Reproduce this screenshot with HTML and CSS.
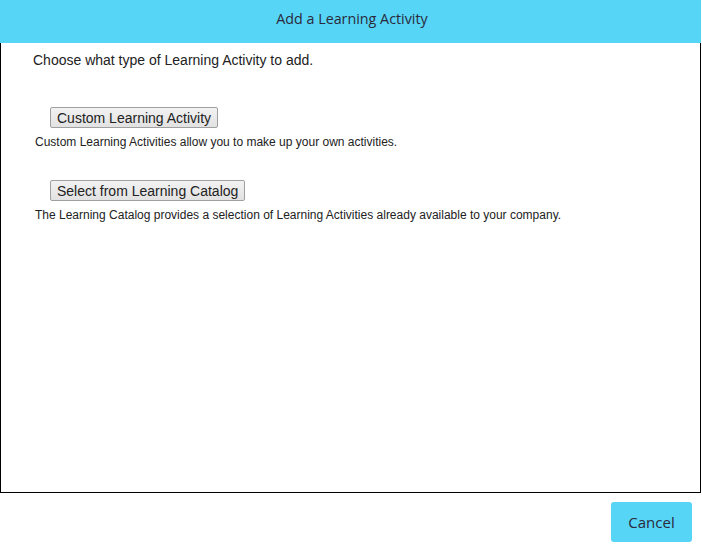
FILE: index.html
```html
<!DOCTYPE html>
<html lang="en">
  <head>
    <meta charset="UTF-8" />
    <title>Add a Learning Activity</title>
    <link rel="stylesheet" href="styles.css">
  </head>
  <body>
    <div class="dialog">
      <div class="dialog-header">Add a Learning Activity</div>
      <div class="dialog-body">
        <p class="intro">Choose what type of Learning Activity to add.</p>
        <div class="option">
          <button type="button" class="option-btn">Custom Learning Activity</button>
          <div class="option-desc">Custom Learning Activities allow you to make up your own activities.</div>
        </div>
        <div class="option">
          <button type="button" class="option-btn">Select from Learning Catalog</button>
          <div class="option-desc">The Learning Catalog provides a selection of Learning Activities already available to your company.</div>
        </div>
      </div>
    </div>
    <div class="dialog-footer">
      <button type="button" class="cancel-btn">Cancel</button>
    </div>
  </body>
</html>
```

FILE: styles.css
```css
*,
*::before,
*::after {
  box-sizing: border-box;
}

body {
  margin: 0;
  font-family: 'Liberation Sans', Arial, sans-serif;
  color: #222;
  background: #fff;
}

.dialog {
  width: 701px;
  height: 493px;
  border: 1px solid #000;
  border-top: none;
  display: flex;
  flex-direction: column;
}

.dialog-header {
  height: 43px;
  margin: 0 -1px;
  background: #56d5f7;
  color: #2a2a3a;
  font-family: 'Open Sans', sans-serif;
  font-size: 14.3px;
  display: flex;
  align-items: center;
  justify-content: center;
  padding: 0 0 6px 3px;
}

.dialog-body {
  padding: 9px 0 0 32px;
}

.intro {
  margin: 0 0 39px;
  font-size: 14px;
  color: #222;
}

.option {
  margin-bottom: 31px;
}

.option-btn {
  margin-left: 17px;
  height: 21px;
  padding: 0 6px;
  font-family: 'Liberation Sans', Arial, sans-serif;
  font-size: 14px;
  color: #222;
  background: linear-gradient(#f2f2f2, #e2e2e2);
  border: 1px solid #a0a0a0;
  border-radius: 2px;
}

.option-desc {
  margin: 7px 0 0 2px;
  font-size: 12px;
  color: #222;
}

.dialog-footer {
  width: 701px;
  display: flex;
  justify-content: flex-end;
  padding: 9px 9px 0 0;
}

.cancel-btn {
  width: 81px;
  height: 40px;
  border: none;
  border-radius: 3px;
  background: #56d5f7;
  color: #2a2a3a;
  font-family: 'Open Sans', sans-serif;
  font-size: 15px;
}
```
